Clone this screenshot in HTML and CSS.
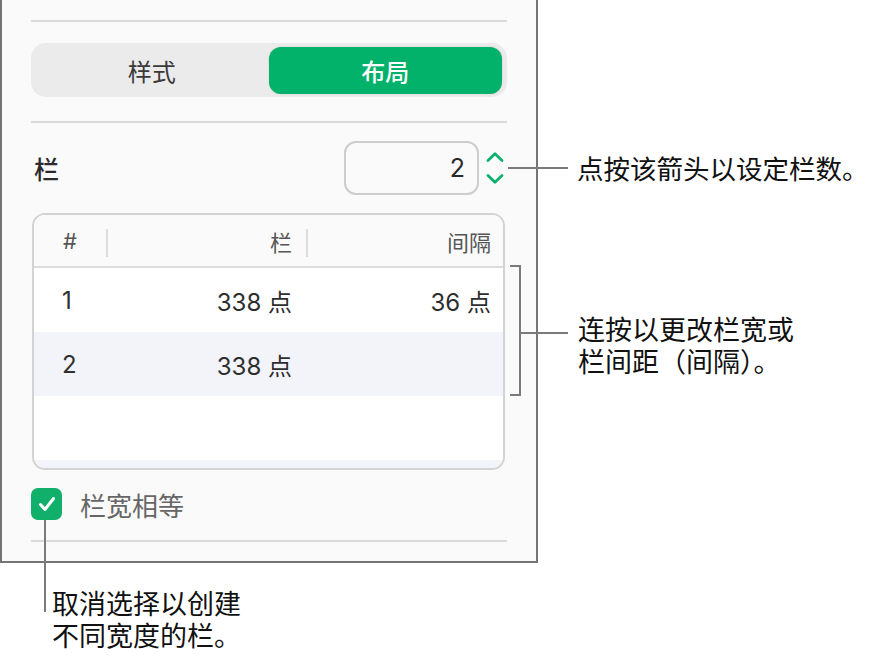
FILE: index.html
```html
<!DOCTYPE html>
<html lang="zh-CN">
<head>
<meta charset="utf-8">
<title>布局</title>
<link rel="stylesheet" href="styles.css">
</head>
<body>
<div class="canvas">
  <div class="panel">
    <div class="sep sep-top"></div>
    <div class="segmented">
      <div class="seg">样式</div>
      <div class="seg seg-on">布局</div>
    </div>
    <div class="sep sep-mid"></div>
    <div class="cols-row">
      <div class="cols-label">栏</div>
      <div class="stepper">
        <div class="stepper-box">2</div>
        <div class="stepper-arrows">
          <svg class="chev" width="20" height="12" viewBox="0 0 20 12"><path d="M3 9.5 L10 2.8 L17 9.5" fill="none" stroke="#0bb06a" stroke-width="2.8" stroke-linecap="round" stroke-linejoin="round"/></svg>
          <svg class="chev" width="20" height="12" viewBox="0 0 20 12"><path d="M3 2.5 L10 9.2 L17 2.5" fill="none" stroke="#0bb06a" stroke-width="2.8" stroke-linecap="round" stroke-linejoin="round"/></svg>
        </div>
      </div>
    </div>
    <div class="table">
      <div class="thead">
        <div class="th th-num">#</div>
        <div class="th th-col"><span class="divider"></span>栏</div>
        <div class="th th-gap"><span class="divider"></span>间隔</div>
      </div>
      <div class="tr">
        <div class="td td-num">1</div>
        <div class="td td-col">338 点</div>
        <div class="td td-gap">36 点</div>
      </div>
      <div class="tr tr-alt">
        <div class="td td-num">2</div>
        <div class="td td-col">338 点</div>
        <div class="td td-gap"></div>
      </div>
      <div class="tr"></div>
      <div class="tr tr-alt"></div>
    </div>
    <div class="check-row">
      <div class="checkbox">
        <svg width="24" height="24" viewBox="0 0 24 24"><path d="M5.5 12.5 L10 17.5 L18.5 6.5" fill="none" stroke="#fff" stroke-width="3" stroke-linecap="round" stroke-linejoin="round"/></svg>
      </div>
      <div class="check-label">栏宽相等</div>
    </div>
    <div class="sep sep-bottom"></div>
  </div>

  <div class="line line-h1"></div>
  <div class="bracket"></div>
  <div class="line line-h2"></div>
  <div class="line line-v3"></div>

  <div class="callout callout-1">点按该箭头以设定栏数。</div>
  <div class="callout callout-2">连按以更改栏宽或<br>栏间距（间隔）。</div>
  <div class="callout callout-3">取消选择以创建<br>不同宽度的栏。</div>
</div>
</body>
</html>
```

FILE: styles.css
```css
* { box-sizing: border-box; }
html, body { margin: 0; padding: 0; background: #fff; }
body {
  font-family: "Inter", "Noto Sans CJK SC", sans-serif;
  color: #222;
}
.canvas {
  position: relative;
  width: 872px;
  height: 660px;
  overflow: hidden;
}
.panel {
  width: 538px;
  height: 563px;
  background: #fafafa;
  border: 2px solid #747474;
  border-top: none;
  padding: 20px 29px 0 29px;
  display: flex;
  flex-direction: column;
}
.sep {
  height: 2px;
  background: #dadada;
  flex: none;
}
.segmented {
  margin-top: 21px;
  height: 54px;
  border-radius: 15px;
  background: #ebebeb;
  padding: 4px 5px 3px 4px;
  display: flex;
}
.seg {
  flex: 1;
  display: flex;
  align-items: center;
  justify-content: center;
  font-size: 24px;
  color: #3a3a3a;
  border-radius: 12px;
}
.seg-on {
  background: #02b16a;
  color: #fff;
  font-weight: 500;
  box-shadow: 0 0 2px rgba(0,0,0,0.15);
}
.sep-mid { margin-top: 24px; }
.cols-row {
  margin-top: 18px;
  height: 54px;
  display: flex;
  align-items: center;
  justify-content: space-between;
  padding-left: 3px;
}
.cols-label {
  font-size: 25px;
  color: #2a2a2a;
  font-weight: 500;
}
.stepper {
  display: flex;
  align-items: center;
  gap: 6px;
  padding-right: 2px;
}
.stepper-box {
  width: 135px;
  height: 54px;
  border: 2px solid #cdcdcd;
  border-radius: 12px;
  background: #fafafa;
  display: flex;
  align-items: center;
  justify-content: flex-end;
  padding-right: 12px;
  font-size: 25px;
  color: #2a2a2a;
}
.stepper-arrows {
  display: flex;
  flex-direction: column;
  gap: 10px;
  width: 20px;
}
.chev { display: block; }
.table {
  margin: 18px 2px 0 1px;
  height: 257px;
  border: 2px solid #d3d3d3;
  border-radius: 13px;
  overflow: hidden;
  background: #fff;
  display: flex;
  flex-direction: column;
}
.thead, .tr {
  display: grid;
  grid-template-columns: 72px 200px 1fr;
  flex: none;
}
.thead {
  height: 53px;
  background: #fafafa;
  border-bottom: 2px solid #dcdcdc;
}
.tr { height: 64px; }
.tr-alt { background: #f3f4fa; }
.th, .td {
  display: flex;
  align-items: center;
  position: relative;
}
.th {
  font-size: 22px;
  color: #555;
}
.th-num { justify-content: center; }
.th-col, .th-gap, .td-col, .td-gap { justify-content: flex-end; }
.th-col, .td-col { padding-right: 14px; }
.th-gap, .td-gap { padding-right: 12px; }
.divider {
  position: absolute;
  left: 0;
  top: 14px;
  width: 2px;
  height: 28px;
  background: #dcdcdc;
}
.td {
  font-size: 24px;
  color: #2e2e2e;
}
.td-num { padding-left: 28px; }
.check-row {
  margin-top: 18px;
  height: 32px;
  display: flex;
  align-items: center;
  gap: 18px;
}
.checkbox {
  width: 31px;
  height: 32px;
  border-radius: 7px;
  background: #10b06a;
  display: flex;
  align-items: center;
  justify-content: center;
}
.checkbox svg { display: block; }
.check-label {
  font-size: 26px;
  color: #666;
}
.sep-bottom { margin-top: 20px; }

.line {
  position: absolute;
  background: #7a7a7a;
}
.line-h1 { left: 508px; top: 167px; width: 60px; height: 2px; }
.line-h2 { left: 519px; top: 332px; width: 49px; height: 2px; }
.line-v3 { left: 44px; top: 520px; width: 2px; height: 92px; }
.bracket {
  position: absolute;
  left: 510px;
  top: 265px;
  width: 11px;
  height: 131px;
  border: 2px solid #7a7a7a;
  border-left: none;
}
.callout {
  position: absolute;
  font-family: "Noto Sans CJK SC", sans-serif;
  font-size: 27px;
  line-height: 32px;
  color: #111;
  white-space: nowrap;
}
.callout-1 { left: 577px; top: 152px; font-size: 26.5px; }
.callout-2 { left: 578px; top: 313px; }
.callout-3 { left: 52px; top: 587px; }
```
